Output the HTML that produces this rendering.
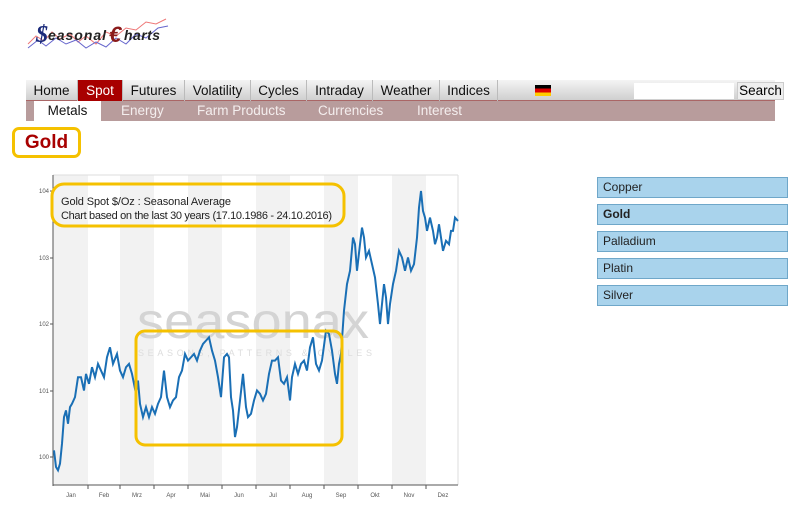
<!DOCTYPE html>
<html><head><meta charset="utf-8"><style>
*{margin:0;padding:0;box-sizing:border-box}
body{width:800px;height:507px;background:#fff;font-family:"Liberation Sans",Arial,sans-serif;position:relative;overflow:hidden}
.abs{position:absolute}
#nav{left:26px;top:80px;width:749px;height:21px;background:linear-gradient(#f4f4f4,#cfcfcf);border-bottom:1px solid #a66}
#nav span{position:absolute;top:0;height:21px;line-height:21px;font-size:13.5px;color:#111;text-align:center;border-right:1px solid #bbb}
#sub{left:26px;top:101px;width:749px;height:20px;background:#b89c9c}
#sub span{position:absolute;top:0;height:20px;line-height:20px;font-size:13.5px;color:#f4eeee}
.side{position:absolute;left:597px;width:191px;height:21px;background:#a9d3ec;border:1px solid #6fa7c9;font-size:12px;line-height:19px;padding-left:5px;color:#222}
</style></head><body>
<svg class="abs" style="left:26px;top:14px" width="145" height="40">
<polyline points="2,30 10,22 18,27 26,18 34,25 44,20 52,28 60,22 70,30 80,18 90,22 100,14 110,16 120,8 130,10 140,5" fill="none" stroke="#e77" stroke-width="1"/>
<polyline points="2,34 12,26 20,32 30,24 40,30 50,26 60,34 70,28 80,33 90,24 100,30 110,20 120,24 132,14 142,12" fill="none" stroke="#66c" stroke-width="1"/>
<text x="10" y="28" font-size="24" font-weight="bold" font-style="italic" fill="#1a2a7a" font-family="Liberation Serif,serif">$</text>
<text x="22" y="26" font-size="14" font-weight="bold" font-style="italic" fill="#222" textLength="58">easonal</text>
<text x="83" y="28" font-size="22" font-weight="bold" font-style="italic" fill="#8a1a1a">€</text>
<text x="98" y="26" font-size="14" font-weight="bold" font-style="italic" fill="#222" textLength="36">harts</text>
</svg>
<div id="nav" class="abs">
<span style="left:0;width:52px">Home</span>
<span style="left:52px;width:45px;background:#a80000;color:#fff">Spot</span>
<span style="left:97px;width:62px">Futures</span>
<span style="left:159px;width:66px">Volatility</span>
<span style="left:225px;width:56px">Cycles</span>
<span style="left:281px;width:66px">Intraday</span>
<span style="left:347px;width:67px">Weather</span>
<span style="left:414px;width:58px">Indices</span>
<div class="abs" style="left:509px;top:5px;width:16px;height:11px;background:linear-gradient(#000 33%,#d00 33%,#d00 66%,#fc0 66%)"></div>
<div class="abs" style="left:608px;top:3px;width:100px;height:16px;background:#fff"></div>
<div class="abs" style="left:711px;top:2px;width:47px;height:18px;background:#eee;border:1px solid #ccc;font-size:13.5px;line-height:16px;text-align:center">Search</div>
</div>
<div id="sub" class="abs">
<span style="left:8px;width:67px;background:#fff;color:#111;text-align:center">Metals</span>
<span style="left:95px">Energy</span>
<span style="left:171px">Farm Products</span>
<span style="left:292px">Currencies</span>
<span style="left:391px">Interest</span>
</div>
<div class="abs" style="left:12px;top:127px;width:69px;height:31px;border:3px solid #f5c100;border-radius:7px;color:#a80000;font-weight:bold;font-size:19px;line-height:25px;text-align:center">Gold</div>
<svg class="abs" style="left:0;top:170px" width="470" height="337" viewBox="0 170 470 337">
<g fill="#f2f2f2">
<rect x="53" y="175" width="35" height="310"/><rect x="120" y="175" width="34" height="310"/><rect x="188" y="175" width="34" height="310"/><rect x="256" y="175" width="34" height="310"/><rect x="324" y="175" width="34" height="310"/><rect x="392" y="175" width="34" height="310"/>
</g>
<line x1="53" y1="175" x2="458" y2="175" stroke="#ddd"/>
<line x1="458" y1="175" x2="458" y2="485" stroke="#ddd"/>
<line x1="53" y1="175" x2="53" y2="486" stroke="#555"/>
<line x1="53" y1="485" x2="458" y2="485" stroke="#555"/>
<g stroke="#555"><line x1="50" y1="191" x2="53" y2="191"/><line x1="50" y1="258" x2="53" y2="258"/><line x1="50" y1="324" x2="53" y2="324"/><line x1="50" y1="391" x2="53" y2="391"/><line x1="50" y1="457" x2="53" y2="457"/>
<line x1="88" y1="485" x2="88" y2="489"/><line x1="120" y1="485" x2="120" y2="489"/><line x1="154" y1="485" x2="154" y2="489"/><line x1="188" y1="485" x2="188" y2="489"/><line x1="222" y1="485" x2="222" y2="489"/><line x1="256" y1="485" x2="256" y2="489"/><line x1="290" y1="485" x2="290" y2="489"/><line x1="324" y1="485" x2="324" y2="489"/><line x1="358" y1="485" x2="358" y2="489"/><line x1="392" y1="485" x2="392" y2="489"/><line x1="426" y1="485" x2="426" y2="489"/></g>
<g font-size="6" fill="#555" text-anchor="end"><text x="49" y="193">104</text><text x="49" y="260">103</text><text x="49" y="326">102</text><text x="49" y="393">101</text><text x="49" y="459">100</text></g>
<g font-size="6" fill="#555" text-anchor="middle"><text x="71" y="497">Jan</text><text x="104" y="497">Feb</text><text x="137" y="497">Mrz</text><text x="171" y="497">Apr</text><text x="205" y="497">Mai</text><text x="239" y="497">Jun</text><text x="273" y="497">Jul</text><text x="307" y="497">Aug</text><text x="341" y="497">Sep</text><text x="375" y="497">Okt</text><text x="409" y="497">Nov</text><text x="443" y="497">Dez</text></g>
<text x="137" y="338" font-size="50" fill="#d4d4d4" textLength="232" lengthAdjust="spacingAndGlyphs">seasonax</text>
<text x="138" y="356" font-size="9" fill="#ddd" textLength="234">SEASONS, PATTERNS &amp; CYCLES</text>
<g transform="translate(0,457) scale(1,-66.5)">
<polyline vector-effect="non-scaling-stroke" fill="none" stroke="#1a6fb5" stroke-width="2" points="54,0.1 56,-0.15 58,-0.2 60,-0.1 62,0.2 64,0.6 66,0.7 68,0.5 70,0.75 72,0.8 75,0.9 78,1.2 81,1.2 84,1.0 86,1.25 89,1.1 92,1.35 95,1.2 98,1.4 101,1.3 104,1.2 107,1.5 110,1.65 113,1.4 117,1.55 120,1.3 123,1.2 126,1.35 129,1.4 132,1.25 136,0.95 138,1.15 140,0.8 143,0.6 146,0.75 149,0.6 152,0.75 155,0.65 158,0.8 161,0.9 164,1.3 167,0.9 170,0.75 173,0.85 176,0.9 179,1.2 182,1.3 185,1.55 188,1.45 191,1.5 194,1.55 197,1.45 200,1.6 203,1.7 206,1.75 209,1.8 212,1.6 215,1.45 218,1.2 221,0.9 224,1.5 227,1.55 229,1.5 231,0.9 233,0.7 235,0.3 237,0.45 240,0.85 243,1.25 246,0.75 248,0.6 251,0.65 254,0.85 257,1.0 260,0.95 263,0.85 266,0.95 269,1.25 272,1.45 275,1.45 278,1.5 281,1.15 284,1.1 287,1.2 290,0.85 292,1.2 295,1.4 298,1.25 301,1.4 304,1.45 307,1.3 310,1.65 313,1.8 316,1.4 319,1.3 322,1.45 326,1.9 329,1.85 332,1.6 335,1.25 337,1.1 339,1.4 341,1.55 344,2.2 347,2.6 350,2.8 353,3.3 355,3.2 357,2.8 360,3.2 362,3.45 364,3.3 366,3.0 369,3.1 372,2.9 375,2.7 378,2.3 380,2.0 382,2.3 384,2.6 386,2.4 388,2.0 390,2.3 393,2.6 396,2.8 399,3.1 402,3.0 405,2.8 408,3.0 411,2.8 414,2.9 417,3.3 419,3.75 421,4.0 423,3.7 425,3.6 427,3.4 430,3.6 433,3.4 435,3.2 437,3.3 439,3.5 441,3.3 443,3.1 446,3.25 449,3.2 451,3.4 453,3.4 455,3.6 458,3.55"/>
</g>
<rect x="52" y="184" width="292" height="42" rx="12" fill="none" stroke="#f5c100" stroke-width="3"/>
<text x="61" y="205" font-size="11" fill="#222" textLength="170">Gold Spot   $/Oz : Seasonal Average</text>
<text x="61" y="219" font-size="11" fill="#222" textLength="271">Chart based on the last 30 years (17.10.1986 - 24.10.2016)</text>
<rect x="136" y="331" width="206" height="114" rx="9" fill="none" stroke="#f5c100" stroke-width="3"/>
</svg>
<div class="side" style="top:177px">Copper</div>
<div class="side" style="top:204px;font-weight:bold">Gold</div>
<div class="side" style="top:231px">Palladium</div>
<div class="side" style="top:258px">Platin</div>
<div class="side" style="top:285px">Silver</div>
</body></html>
